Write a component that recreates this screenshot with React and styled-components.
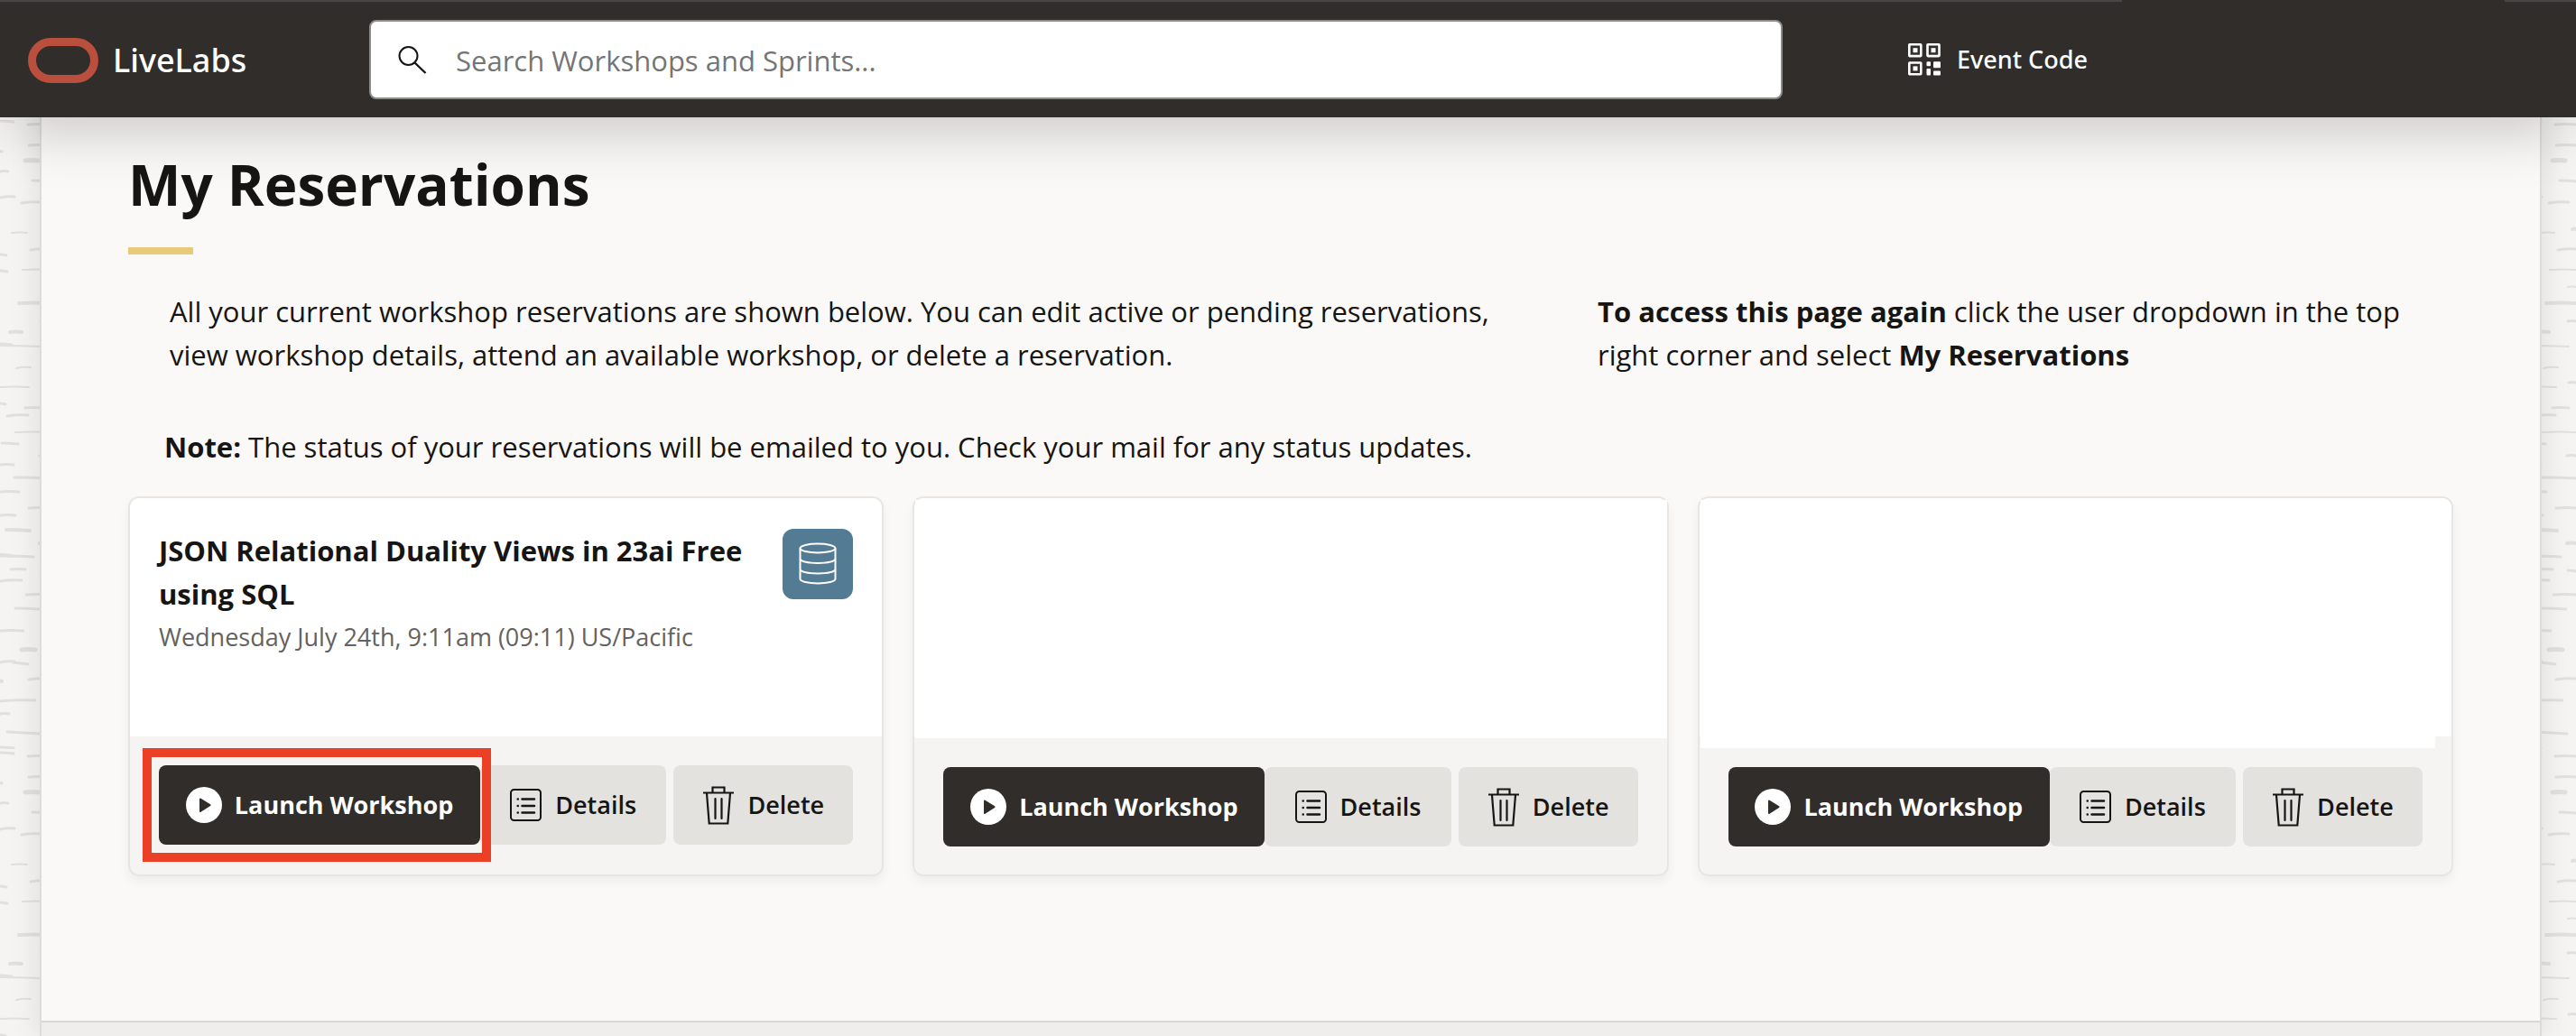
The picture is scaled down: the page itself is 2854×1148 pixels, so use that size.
import React from "react";
import styled, { createGlobalStyle } from "styled-components";

const GlobalStyle = createGlobalStyle`
  * { box-sizing: border-box; }
  html, body { margin: 0; padding: 0; }
  body {
    overflow: hidden;
    background: #f5f4f2;
    color: #161513;
    font-family: "Open Sans", "Noto Sans", sans-serif;
    font-size: 31px;
    line-height: 48px;
  }
  h1, h2, p { margin: 0; }
`;

const Page = styled.div`
  position: relative;
  display: flex;
  flex-direction: column;
  min-height: 100vh;
`;

const Texture = styled.svg`
  position: absolute;
  inset: 0;
  width: 100%;
  height: 100%;
`;

const Header = styled.header`
  position: relative;
  z-index: 2;
  display: flex;
  align-items: center;
  height: 130px;
  padding: 2px 31px 0;
  background: #312d2a;
  color: #fff;
  box-shadow: 0 32px 64px -16px rgba(0, 0, 0, 0.2);
`;

const TopLine = styled.div`
  position: absolute;
  top: 0;
  left: ${(p) => p.$from};
  right: ${(p) => p.$to};
  height: 2px;
  background: #464646;
`;

const Brand = styled.a`
  display: flex;
  align-items: center;
  gap: 16px;
  width: 378px;
  flex: none;
  padding-top: 2px;
  color: #fff;
  text-decoration: none;
  font-family: "Noto Sans", "Open Sans", sans-serif;
  font-size: 36px;
  font-weight: 500;
`;

const SearchBox = styled.label`
  display: flex;
  align-items: center;
  gap: 32px;
  flex: 0 1 1566px;
  height: 88px;
  padding: 0 30px;
  background: #fff;
  border: 2px solid #8b8b8a;
  border-radius: 8px;
  color: #161513;
  svg { flex: none; }
`;

const SearchInput = styled.input`
  flex: 1;
  min-width: 0;
  border: 0;
  outline: 0;
  padding: 2px 0 0;
  background: transparent;
  font: inherit;
  color: #161513;
  &::placeholder { color: #757575; opacity: 1; }
`;

const EventLink = styled.a`
  display: flex;
  align-items: center;
  gap: 18px;
  margin-left: 139px;
  color: #fff;
  text-decoration: none;
  font-family: "Noto Sans", "Open Sans", sans-serif;
  font-size: 27px;
  font-weight: 500;
  white-space: nowrap;
`;

const Panel = styled.div`
  position: relative;
  display: flex;
  flex-direction: column;
  flex: 1;
  margin: 0 38px 0 44px;
  background: #fbf9f8;
  border: solid #dddcda;
  border-width: 0 2px;
  box-shadow: 0 0 32px rgba(0, 0, 0, 0.1);
`;

const Main = styled.main`
  padding: 34px 96px 160px;
`;

const Title = styled.h1`
  font-size: 62px;
  line-height: 80px;
  font-weight: 700;
`;

const Accent = styled.div`
  width: 72px;
  height: 8px;
  margin-top: 30px;
  background: #e9ca7b;
`;

const Intro = styled.div`
  display: grid;
  grid-template-columns: 1518fr 902fr;
  gap: 64px;
  padding: 39px 46px 54px;
`;

const Note = styled.p`
  padding: 0 40px 31px;
`;

const Cards = styled.div`
  display: grid;
  grid-template-columns: repeat(3, 1fr);
  gap: 32px;
`;

const Card = styled.article`
  display: flex;
  flex-direction: column;
  border: 2px solid #e7e6e5;
  border-radius: 12px;
  background: #f5f4f2;
  box-shadow: 0 6px 12px rgba(0, 0, 0, 0.05);
`;

const CardBody = styled.div`
  position: relative;
  display: flex;
  justify-content: space-between;
  min-height: 264px;
  padding: 34px 32px 0;
  background: #fff;
  border-radius: 10px 10px 0 0;
`;

const Blank = styled.div`
  position: absolute;
  top: 2px;
  left: 1px;
  right: ${(p) => p.$right}px;
  bottom: -${(p) => p.$drop}px;
  background: #fff;
`;

const CardTitle = styled.h2`
  font-size: 31px;
  line-height: 48px;
  font-weight: 700;
`;

const CardDate = styled.p`
  font-size: 27px;
  color: #646260;
`;

const Badge = styled.div`
  display: flex;
  align-items: center;
  justify-content: center;
  flex: none;
  width: 78px;
  height: 78px;
  border-radius: 12px;
  background: #537b94;
`;

const Actions = styled.div`
  display: flex;
  padding: ${(p) => (p.$low ? "34px 32px 31px" : "32px 32px 33px")};
`;

const Spot = styled.div`
  position: relative;
  display: flex;
  flex: 356 1 0;
`;

const Highlight = styled.div`
  position: absolute;
  z-index: 1;
  inset: -19px -12px -19px -18px;
  border: 10px solid #eb4026;
  pointer-events: none;
`;

const Button = styled.button`
  display: flex;
  align-items: center;
  justify-content: center;
  gap: 14px;
  flex: ${(p) => p.$grow} 1 0;
  height: 88px;
  padding: 0;
  margin-left: ${(p) => (p.$spaced ? 8 : 0)}px;
  border: 0;
  border-radius: 8px;
  background: ${(p) => (p.$primary ? "#312d2a" : "#e4e2de")};
  color: ${(p) => (p.$primary ? "#fff" : "#161513")};
  font: inherit;
  font-size: 27px;
  font-weight: ${(p) => (p.$primary ? 700 : 600)};
  white-space: nowrap;
  svg { flex: none; }
`;

const PageFoot = styled.footer`
  flex: 1;
  min-height: 18px;
  border-top: 2px solid #d9d8d6;
  background: #efeeec;
`;

/* Bark strokes of one 700px tile: start x, end x, y, thickness, slope */
const STROKES = [
  [0, 15, 134, 3, 1], [31, 54, 138, 3, 0], [32, 54, 161, 3, 0], [28, 42, 178, 5, 0],
  [0, 2, 168, 3, 0], [0, 9, 190, 3, 0], [36, 54, 200, 3, 1], [0, 16, 219, 3, -1],
  [24, 46, 225, 3, -1], [13, 30, 258, 2, 0], [50, 54, 254, 4, 0], [34, 54, 277, 3, -1],
  [0, 7, 282, 3, 1], [0, 8, 300, 3, 1], [25, 54, 299, 2, 0], [45, 54, 318, 2, 0],
  [21, 54, 336, 4, 0], [45, 54, 356, 3, 0], [11, 24, 368, 4, 0], [0, 13, 381, 3, 1],
  [1, 46, 383, 2, 1], [18, 34, 408, 2, -1], [46, 54, 424, 3, 0], [0, 32, 429, 2, 0],
  [0, 6, 447, 3, 1], [28, 46, 452, 3, 0], [8, 31, 461, 3, -1], [17, 54, 479, 2, 0],
  [2, 20, 491, 3, 1], [44, 54, 505, 3, 0], [0, 15, 515, 3, 0], [16, 54, 529, 3, 1],
  [0, 21, 545, 3, 0], [32, 54, 563, 3, 0], [0, 17, 571, 3, 0], [7, 33, 587, 4, 1],
  [44, 54, 602, 4, 0], [0, 12, 615, 4, 1], [1, 37, 616, 3, 1], [12, 28, 631, 3, 0],
  [45, 54, 632, 3, 1], [0, 24, 644, 3, -1], [29, 54, 659, 3, 0], [17, 43, 674, 3, 1],
  [0, 26, 699, 3, 0], [24, 39, 720, 5, 0], [0, 16, 734, 3, -1], [14, 31, 734, 3, 2],
  [32, 54, 753, 3, -1], [0, 2, 755, 4, 0], [0, 39, 777, 3, -1], [0, 10, 791, 3, 0],
  [8, 44, 811, 3, 2], [0, 15, 828, 3, 1],
];

const BarkTexture = () => (
  <Texture aria-hidden="true">
    <defs>
      <pattern id="bark" x="0" y="130" width="700" height="700" patternUnits="userSpaceOnUse">
        <g stroke="#e1e0dd" strokeLinecap="round" fill="none">
          {STROKES.map(([x1, x2, y, w, s], i) => (
            <path
              key={i}
              strokeWidth={w}
              d={`M${x1} ${(y - 130) % 700} q${(x2 - x1) / 2} ${s - 1} ${x2 - x1} ${s}`}
            />
          ))}
        </g>
      </pattern>
    </defs>
    <rect width="100%" height="100%" fill="url(#bark)" />
  </Texture>
);

const LogoMark = () => (
  <svg width="78" height="50" viewBox="0 0 78 50" fill="none" aria-hidden="true">
    <rect x="4.5" y="4.5" width="69" height="41" rx="20.5" stroke="#b94f3c" strokeWidth="9" />
  </svg>
);

const SearchIcon = () => (
  <svg width="32" height="32" viewBox="0 0 32 32" fill="none" stroke="currentColor" strokeWidth="2" aria-hidden="true">
    <circle cx="11.500" cy="12" r="10" />
    <path d="M18.500 19.500L30.500 31" strokeWidth="2.400" />
  </svg>
);

const QrIcon = () => (
  <svg width="36" height="36" viewBox="0 0 36 36" fill="#fff" aria-hidden="true">
    <g fill="none" stroke="#fff" strokeWidth="2.600">
      <rect x="1.300" y="1.300" width="13" height="12.800" rx="0.500" />
      <rect x="21.500" y="1.300" width="13" height="12.800" rx="0.500" />
      <rect x="1.300" y="21.500" width="13" height="12.800" rx="0.500" />
    </g>
    <rect x="5.500" y="5.200" width="5" height="5" />
    <rect x="25.500" y="5.200" width="5" height="5" />
    <rect x="5.500" y="25.400" width="5" height="5" />
    <rect x="20.500" y="20.300" width="4.500" height="5" rx="1" />
    <rect x="28" y="20.300" width="8" height="7" rx="1" />
    <rect x="20.500" y="28" width="4.500" height="7.500" rx="1" />
    <rect x="28" y="30.500" width="8" height="5" rx="1" />
  </svg>
);

const DatabaseIcon = () => (
  <svg width="42" height="48" viewBox="0 0 42 48" fill="none" stroke="#fff" strokeWidth="2" aria-hidden="true">
    <ellipse cx="21" cy="6.500" rx="19.500" ry="5" />
    <path d="M1.500 6.500v34c0 2.800 8.700 5 19.500 5s19.500-2.200 19.500-5v-34" />
    <path d="M1.500 18.500c1 2.500 9 4.500 19.500 4.500s18.500-2 19.500-4.500M1.500 30c1 2.500 9 4.500 19.500 4.500S39.500 32.500 40.500 30" />
  </svg>
);

const PlayIcon = () => (
  <svg width="40" height="40" viewBox="0 0 40 40" aria-hidden="true">
    <circle cx="20" cy="20" r="20" fill="#fff" />
    <path d="M16 13.500L26.500 20.200L16 27Z" fill="#312d2a" stroke="#312d2a" strokeWidth="2" strokeLinejoin="round" />
  </svg>
);

const DetailsIcon = () => (
  <svg width="36" height="36" viewBox="0 0 36 36" fill="none" stroke="currentColor" strokeWidth="2" strokeLinecap="round" aria-hidden="true">
    <rect x="1" y="1" width="33" height="34" rx="3.500" />
    <path d="M13.500 11.500H27M13.500 19H27M13.500 26.500H27M8.700 11.500h.1M8.700 19h.1M8.700 26.500h.1" strokeWidth="2.500" />
  </svg>
);

const TrashIcon = () => (
  <svg width="36" height="44" viewBox="0 0 36 44" fill="none" stroke="currentColor" strokeWidth="2.200" aria-hidden="true">
    <path d="M1 8.500H35M11.500 8V2.500H24.500V8M5 9L7.700 42.500H28.300L31 9" />
    <path d="M14.500 15V37M21.500 15V37" strokeLinecap="round" />
  </svg>
);

const reservations = [
  {
    title: "JSON Relational Duality Views in 23ai Free using SQL",
    date: "Wednesday July 24th, 9:11am (09:11) US/Pacific",
    highlighted: true,
  },
  { blank: { right: 0, drop: 2 } },
  { blank: { right: 18, drop: 13 } },
];

const ReservationCard = ({ title, date, highlighted, blank }) => (
  <Card>
    <CardBody>
      {blank ? (
        <Blank $right={blank.right} $drop={blank.drop} />
      ) : (
        <>
          <div>
            <CardTitle>{title}</CardTitle>
            <CardDate>{date}</CardDate>
          </div>
          <Badge>
            <DatabaseIcon />
          </Badge>
        </>
      )}
    </CardBody>
    <Actions $low={Boolean(blank)}>
      <Spot>
        <Button type="button" $primary $grow={1}>
          <PlayIcon />
          Launch Workshop
        </Button>
        {highlighted && <Highlight />}
      </Spot>
      <Button type="button" $grow={206}>
        <DetailsIcon />
        Details
      </Button>
      <Button type="button" $grow={199} $spaced>
        <TrashIcon />
        Delete
      </Button>
    </Actions>
  </Card>
);

export default function App() {
  return (
    <>
      <GlobalStyle />
      <Page>
        <BarkTexture />
        <Header>
          <TopLine $from="0" $to="503px" />
          <TopLine $from="calc(100% - 79px)" $to="0" />
          <Brand href="#home">
            <LogoMark />
            LiveLabs
          </Brand>
          <SearchBox>
            <SearchIcon />
            <SearchInput type="text" placeholder="Search Workshops and Sprints..." aria-label="Search Workshops and Sprints" />
          </SearchBox>
          <EventLink href="#event-code">
            <QrIcon />
            Event Code
          </EventLink>
        </Header>
        <Panel>
          <Main>
            <Title>My Reservations</Title>
            <Accent />
            <Intro>
              <p>
                All your current workshop reservations are shown below. You can edit active or pending
                reservations, view workshop details, attend an available workshop, or delete a reservation.
              </p>
              <p>
                <strong>To access this page again</strong> click the user dropdown in the top right corner
                and select <strong>My Reservations</strong>
              </p>
            </Intro>
            <Note>
              <strong>Note:</strong> The status of your reservations will be emailed to you. Check your mail
              for any status updates.
            </Note>
            <Cards>
              {reservations.map((r, i) => (
                <ReservationCard key={i} {...r} />
              ))}
            </Cards>
          </Main>
          <PageFoot />
        </Panel>
      </Page>
    </>
  );
}
